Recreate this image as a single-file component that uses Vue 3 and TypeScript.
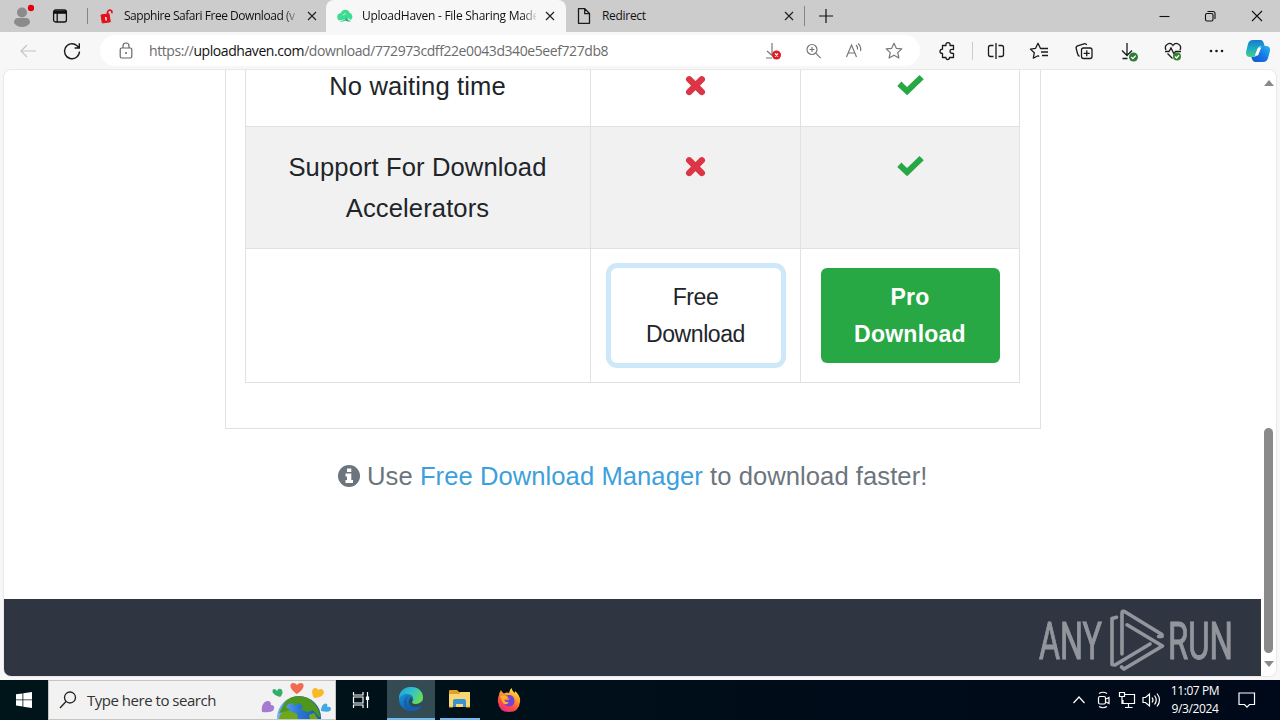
<script setup lang="ts">
interface Row {
  label: string
}

const rows: Row[] = [
  { label: 'No waiting time' },
  { label: 'Support For Download Accelerators' },
]
</script>

<template>
  <div class="screen">
    <header class="tabstrip">
      <div class="profile">
        <svg width="24" height="32" viewBox="0 0 24 32">
          <circle cx="12" cy="12.500" r="5" fill="#8b8b8b" />
          <path d="M4 23q0-5 4-5h8q4 0 4 5-3 4-8 4t-8-4z" fill="#8b8b8b" />
          <circle cx="21" cy="8" r="3.200" fill="#e3000f" />
        </svg>
      </div>
      <div class="workspaces">
        <svg width="16" height="16" viewBox="0 0 16 16" fill="none" stroke="#111" stroke-width="1.300">
          <rect x="1.600" y="2" width="12.800" height="12" rx="2" />
          <path d="M2 4.300h12" stroke-width="3" />
          <path d="M5.200 5v9" />
        </svg>
      </div>
      <div class="tab first">
        <svg class="fav" width="16" height="16" viewBox="0 0 16 16">
          <path d="M2 7l8-1.200 1.300 8L3.300 15z" fill="#e3101b" stroke="#e3101b" stroke-linejoin="round" />
          <path d="M8.500 6V4.200Q9.500 1.300 12.300 2.500 13.300 3 12.800 5.300" fill="none" stroke="#e3101b" stroke-width="1.700" />
          <path d="M6.700 9l.5 3.500" stroke="#fff" stroke-width="1.400" />
        </svg>
        <span class="title t1">Sapphire Safari Free Download (v</span>
        <svg class="close" width="12" height="12" viewBox="0 0 12 12"><path d="M2 2l8 8M10 2l-8 8" /></svg>
      </div>
      <div class="tab active">
        <svg class="fav" width="16" height="16" viewBox="0 0 16 16">
          <path d="M1.500 12.300C-1 9 .4 5.500 3.600 5.300 5 .500 11.500.500 12.800 5 16 6 16.200 10.500 13.500 12c-4-4.500-5 1-12 .3z" fill="#3ddc91" />
          <path d="M2.500 13c4 .5 6-2 7-4 1 2 2 3 4.500 4.500-2 0-5 .1-6-1-1 1-4 1.600-5.500.5z" fill="#24b886" />
          <path d="M5.500 7.500Q7 5 9 6" fill="none" stroke="#b7f5da" />
        </svg>
        <span class="title t2">UploadHaven - File Sharing Made</span>
        <svg class="close" width="12" height="12" viewBox="0 0 12 12"><path d="M2 2l8 8M10 2l-8 8" /></svg>
      </div>
      <div class="tab last">
        <svg class="fav" width="16" height="16" viewBox="0 0 16 16">
          <path d="M2.500.700h6.300L13.500 5.500V15.300h-11zM8.700.700v5h4.800" fill="none" stroke="#1a1a1a" stroke-width="1.300" stroke-linejoin="round" />
        </svg>
        <span class="title t3">Redirect</span>
        <svg class="close" width="12" height="12" viewBox="0 0 12 12"><path d="M2 2l8 8M10 2l-8 8" /></svg>
      </div>
      <svg class="newtab" width="16" height="16" viewBox="0 0 16 16"><path d="M1 8h14M8 1v14" stroke="#111" stroke-width="1.200" /></svg>
      <div class="winctl">
        <svg width="46" height="32" viewBox="0 0 46 32"><path d="M17.500 16.500h10" /></svg>
        <svg width="46" height="32" viewBox="0 0 46 32"><rect x="17.500" y="13.500" width="7.500" height="7.500" rx="1.500" /><path d="M19.500 11.500h5.500q2 0 2 2v5.500" /></svg>
        <svg width="46" height="32" viewBox="0 0 46 32"><path d="M18 11l10 10M28 11l-10 10" /></svg>
      </div>
    </header>

    <div class="toolbar">
      <svg class="back" width="20" height="20" viewBox="0 0 20 20"><path d="M18 10H3M9 4l-6 6 6 6" fill="none" stroke="#c4c4c4" stroke-width="1.200" /></svg>
      <svg class="reload" width="20" height="20" viewBox="0 0 20 20">
        <path d="M17.500 10.500A7.500 7.500 0 1 1 14.800 4.500L17 6.800M17.300 2.300V7h-4.700" fill="none" stroke="#1b1b1b" stroke-width="1.400" />
      </svg>
      <div class="address">
        <svg class="lock" width="16" height="18" viewBox="0 0 16 18" fill="none" stroke="#666" stroke-width="1.200">
          <rect x="2.200" y="6" width="11.600" height="10" rx="1.500" />
          <path d="M5 6V4q0-3 3-3t3 3v2" />
          <circle cx="8" cy="11" r="1" fill="#666" stroke="none" />
        </svg>
        <span class="url">https://<b>uploadhaven.com</b>/download/772973cdff22e0043d340e5eef727db8</span>
        <div class="urlicons">
          <svg width="40" height="24" viewBox="0 0 40 24" fill="none" stroke="#777" stroke-width="1.200">
            <path d="M18 4v12M13 12l5 4.500M12 19h6" />
            <circle cx="22.500" cy="16" r="4.500" fill="#e01b22" stroke="none" />
            <path d="M21 14.500l3 3M24 14.500l-3 3" stroke="#fff" />
          </svg>
          <svg width="40" height="24" viewBox="0 0 40 24" fill="none" stroke="#777" stroke-width="1.200">
            <circle cx="18" cy="10.500" r="5" /><path d="M21.700 14.200l5 5M15.500 10.500h5M18 8v5" />
          </svg>
          <svg width="40" height="24" viewBox="0 0 40 24" fill="none" stroke="#777" stroke-width="1.200">
            <path d="M12.500 18L17.500 6l5 12M14.200 14h6.600M22 6q2 1.800 1.500 4.500M24 4.500q3.500 3 2.500 7.500" />
          </svg>
          <svg width="40" height="24" viewBox="0 0 40 24" fill="none" stroke="#777" stroke-width="1.200" stroke-linejoin="round">
            <path d="M20 4.300l2.300 5 5.500.6-4.100 3.700 1.200 5.400-4.900-2.800-4.900 2.800 1.200-5.400-4.100-3.700 5.500-.6z" />
          </svg>
        </div>
      </div>
      <div class="actions">
        <svg width="44" height="24" viewBox="0 0 44 24" fill="none" stroke="#1b1b1b" stroke-width="1.300" stroke-linejoin="round">
          <path d="M15.500 6.500H19q-.5-2.800 2-2.800t2 2.800h3.500v4q-3.500-.5-3.500 1.700t3.500 2.300v4h-4q0 2-1.800 2t-1.700-2h-3.500v-4Q13 14.500 13 12.400t2.500-2.200z" />
        </svg>
        <i class="sep"></i>
        <svg width="44" height="24" viewBox="0 0 44 24" fill="none" stroke="#1b1b1b" stroke-width="1.300">
          <path d="M19.500 6.500h-3q-2 0-2 2v7q0 2 2 2h3M24.500 6.500h3q2 0 2 2v7q0 2-2 2h-3M22 4v16" />
        </svg>
        <svg width="45" height="24" viewBox="0 0 45 24" fill="none" stroke="#1b1b1b" stroke-width="1.300" stroke-linejoin="round">
          <path d="M24.500 9.500h-2L20 4.300l-2.400 5-5.200.8 3.900 3.700-1 5.400L20 16.700l1.200.8M24.500 9.500H30M23 13h7M24 16.500h6" />
        </svg>
        <svg width="44" height="24" viewBox="0 0 44 24" fill="none" stroke="#1b1b1b" stroke-width="1.300" stroke-linejoin="round">
          <path d="M16.500 17.500q-1.500-1-2-3l-1.300-5q-.5-2 1.400-2.600l6.400-2.100q2-.5 2.700 1.300" />
          <rect x="18.500" y="9" width="10.500" height="10.500" rx="2" /><path d="M23.750 11.300v6M20.700 14.300h6" />
        </svg>
        <svg width="45" height="24" viewBox="0 0 45 24" fill="none" stroke="#1b1b1b" stroke-width="1.300">
          <path d="M20 4v12M15 11.500l5 5 5-5M15.500 19.500h5" />
          <circle cx="26.500" cy="18" r="4.500" fill="#2d7d37" stroke="none" /><path d="M24.300 18l1.600 1.600 2.800-3" stroke="#fff" />
        </svg>
        <svg width="44" height="24" viewBox="0 0 44 24" fill="none" stroke="#1b1b1b" stroke-width="1.300">
          <path d="M14 11c-2.500-5 4-9 7-4.500 3-4.500 9.500-.5 7 4.500M13 12.500h4l2-3.500 3 6 1.500-2.500H29M15.500 14.500l5 5" />
          <circle cx="25" cy="17.500" r="4" fill="#35852f" stroke="none" /><path d="M23 17.500l1.500 1.500 2.500-2.700" stroke="#fff" />
        </svg>
        <svg width="42" height="24" viewBox="0 0 42 24" fill="#1b1b1b">
          <circle cx="15" cy="12" r="1.300" /><circle cx="20.500" cy="12" r="1.300" /><circle cx="26" cy="12" r="1.300" />
        </svg>
        <svg class="copilot" width="26" height="24" viewBox="0 0 26 24">
          <defs>
            <linearGradient id="cpa" x1="0" y1="0" x2="0" y2="1"><stop offset="0" stop-color="#1978d4" /><stop offset=".55" stop-color="#20afc0" /><stop offset="1" stop-color="#45cf88" /></linearGradient>
            <linearGradient id="cpb" x1="1" y1="0" x2="0" y2="1"><stop offset="0" stop-color="#25b9ec" /><stop offset=".5" stop-color="#1675e7" /><stop offset="1" stop-color="#1455cf" /></linearGradient>
          </defs>
          <path d="M8 1h7.500q2.500 0 3.500 4l.7 2H16q-2 0-3 3l-2 6q-.8 2-3 2H5q-4.500 0-4-5l2-8q1-4 5-4z" fill="url(#cpa)" />
          <path d="M18 23h-7.500q-2.500 0-3.500-3l-.6-2H9q2.300 0 3.200-3l2-6q.8-2 3-2H21q4.500 0 4 5l-2 7q-1 4-5 4z" fill="url(#cpb)" />
          <path d="M13 8.500h3.200L13 16.500H9.800z" fill="#fff" />
        </svg>
      </div>
    </div>

    <main class="frame">
      <div class="page">
        <section class="card">
          <div class="table">
            <template v-for="(row, i) in rows" :key="row.label">
              <div :class="['cell', 'label', 'row' + i]"><span>{{ row.label }}</span></div>
              <div :class="['cell', 'row' + i]">
                <svg class="mark" width="22" height="41" viewBox="0 0 22 41"><path d="M4.200 13.300l12.600 12.600M16.800 13.300L4.200 25.900" fill="none" stroke="#dc3545" stroke-width="6.400" stroke-linecap="round" /></svg>
              </div>
              <div :class="['cell', 'row' + i]">
                <svg class="mark" width="28" height="41" viewBox="0 0 28 41"><path d="M5.500 19.800l5.600 5.400L23.500 13.200" fill="none" stroke="#28a745" stroke-width="6" stroke-linecap="square" stroke-linejoin="miter" /></svg>
              </div>
            </template>
            <div class="cell buttons"></div>
            <div class="cell buttons"><button class="btn free">Free<br>Download</button></div>
            <div class="cell buttons"><button class="btn pro">Pro<br>Download</button></div>
          </div>
        </section>
        <p class="tip">
          <svg width="22" height="22" viewBox="0 0 22 22"><circle cx="11" cy="11" r="11" fill="#6c757d" /><path d="M9 3.500h4.300v3.400H9zM7.500 8.500h5.800v6.500h1.700v3H7.500v-3H9v-3.600H7.500z" fill="#fff" /></svg>
          <span>Use <a>Free Download Manager</a> to download faster!</span>
        </p>
        <footer class="footer"></footer>
      </div>
      <div class="scroll">
        <svg width="10" height="6" viewBox="0 0 10 6"><path d="M0 6l5-6 5 6z" fill="#8a8a8a" /></svg>
        <div class="thumb"></div>
        <svg width="10" height="6" viewBox="0 0 10 6"><path d="M0 0l5 6 5-6z" fill="#8a8a8a" /></svg>
      </div>
    </main>

    <svg class="watermark" width="204" height="66" viewBox="0 0 204 66">
      <g fill="#fff" font-family="Roboto, sans-serif" font-size="51.500" font-weight="400" stroke="#fff" stroke-width="1">
        <text x="2" y="50.500" textLength="63" lengthAdjust="spacingAndGlyphs">ANY</text>
        <text x="131" y="50.500" textLength="65" lengthAdjust="spacingAndGlyphs">RUN</text>
      </g>
      <g fill="none" stroke="#fff" stroke-width="3.600" stroke-linejoin="round" stroke-linecap="round">
        <path d="M79.500 9.300L75 10.500v46l3 .5 35-21" />
        <path d="M85 46V5q0-2.500 2.500-1.500L125 26.500v2h-3.500" />
        <path d="M90 16.800L125.500 38 87 61l-2.500-2" />
      </g>
    </svg>

    <div class="taskbar">
      <div class="start"><svg width="16" height="16" viewBox="0 0 16 16" fill="#fff"><path d="M0 2.300l6.500-.9v6.100H0zM7.300 1.300L16 0v7.500H7.300zM0 8.300h6.500v6.200L0 13.600zM7.300 8.300H16V16l-8.700-1.300z" /></svg></div>
      <div class="search">
        <svg width="18" height="18" viewBox="0 0 18 18" fill="none" stroke="#222" stroke-width="1.300"><circle cx="11" cy="6.500" r="5.500" /><path d="M7 10.500L1 17" /></svg>
        <span>Type here to search</span>
        <svg class="earth" width="74" height="38" viewBox="0 0 74 38">
          <defs><linearGradient id="sea"><stop offset="0" stop-color="#79b4fb" /><stop offset=".5" stop-color="#2a76d6" /><stop offset="1" stop-color="#1859ac" /></linearGradient></defs>
          <circle cx="38" cy="37" r="22" fill="url(#sea)" />
          <path d="M24 21q6-6 13-6 9 0 15 6 7 7 7 16l-3-3-4-5-5 2-7-2 2-4-5-3-3 3-2-3-5 1-2 3 4 3-4 2-7 1z" fill="#4f971c" />
          <path d="M19 34l3-3 7-1 7 3 1 5H18zM48 34l5-2 4 6h-8z" fill="#6fa81b" />
          <path d="M36 13C27 7 29 2 32 2q3 0 4 2 1-2 4-2c4 0 4 6-4 11z" fill="#f26b50" />
          <path d="M19 16C11 14 10 9 13 8q2 0 3 2 1-3 4-2c3 2 1 7-1 8z" fill="#35ae69" />
          <path d="M53 17C50 12 51 7 54 7q3 0 3 2 3-2 5 0c3 4-2 8-9 8z" fill="#fbb827" />
          <path d="M1 31C0 24 3 20 7 20q3 0 3 4 4 0 3 4-1 4-12 3z" fill="#a47bd1" />
          <path d="M60 30C60 24 64 21 66 23q1 1 0 3 4-1 4 2 0 4-10 2z" fill="#41a7e7" />
        </svg>
      </div>
      <div class="app">
        <svg width="20" height="20" viewBox="0 0 20 20" fill="none" stroke="#fff" stroke-width="1.200"><path d="M2.500 2v3h9.500V2M2.500 18v-3H12v3M2.500 7H12v6H2.500zM16.500 2v16" /><path d="M15.500 7h2v2.500h-2z" fill="#fff" /></svg>
      </div>
      <div class="app open current">
        <svg width="26" height="26" viewBox="0 0 26 26">
          <defs>
            <linearGradient id="ea" x1="0" y1="0" x2="1" y2=".5"><stop offset="0" stop-color="#249bdc" /><stop offset=".55" stop-color="#30c4c8" /><stop offset="1" stop-color="#67db59" /></linearGradient>
            <linearGradient id="eb" x1="0" y1="0" x2=".8" y2="1"><stop offset="0" stop-color="#1ba4e2" /><stop offset="1" stop-color="#0c4c9c" /></linearGradient>
          </defs>
          <circle cx="13" cy="13" r="12" fill="url(#eb)" />
          <path d="M1 13C1 5 6 1 13 1c8 0 12 5 12 10.500 0 5-4 6.500-7 6.500-5 0-4-2-3-3.500C16 12 14 8 9.500 8 5 8 2 10 1 13z" fill="url(#ea)" />
          <path d="M11 10q-3 2-2.500 5.500C9 20 13 22 18 21q3-.5 5.500-2-2 6-9.500 6C8 25 5 20 6 15q1-4 5-5z" fill="#1260b2" />
          <path d="M14.500 14.500C13 17 14 18 18 18q4 0 6-3l-.5 4q-3 2-6 2-5 0-6.500-3.500-1-3 1.500-6 2 1 2 3z" fill="#314a52" />
        </svg>
      </div>
      <div class="app open">
        <svg class="folder" width="24" height="22" viewBox="0 0 24 22">
          <path d="M1 3q0-1 1-1h7l2 2h11v14H1z" fill="#e3a026" /><path d="M1 6h10l2-2h9v15H1z" fill="#f9d773" />
          <path d="M5 19v-6q0-2 2-2h9q2 0 2 2v6h-3v-3H8v3z" fill="#3c91d0" /><path d="M1 19h4M18 19h4" stroke="#ddad42" />
        </svg>
      </div>
      <div class="app">
        <svg width="24" height="26" viewBox="0 0 24 26">
          <defs><linearGradient id="ff" x1=".8" y1="0" x2=".3" y2="1"><stop offset="0" stop-color="#fff044" /><stop offset=".4" stop-color="#ff9a28" /><stop offset=".7" stop-color="#ff4c42" /><stop offset="1" stop-color="#e82b80" /></linearGradient></defs>
          <path d="M2 8q0-2 2-5 1 3 3 3.500Q10 5 12 6q1-4 2.500-5Q15 4 18 6V4q6 5 5 11-1 10-11 10T1 15q-.5-4 1-7z" fill="url(#ff)" />
          <path d="M8 9q8-3 9.500 4Q18 19 12 19.500 6 19 7 13l4 .5 2-2-3-.5z" fill="#7142d7" />
          <path d="M3 9q3-1 5 0l3 .5-1 2.500-3 .8Q8 16 12 15q-2 4-6 1z" fill="#ffb32c" />
        </svg>
      </div>
      <div class="tray">
        <svg width="24" height="24" viewBox="0 0 24 24"><path d="M6.500 15l5.500-6 5.500 6" /></svg>
        <svg width="24" height="24" viewBox="0 0 24 24"><rect x="7.500" y="8.500" width="7" height="7.500" rx="1.500" /><path d="M15 11l3-1.500v6L15 14M8 5.500q4-2.500 8 0M8 18.500q4 2.500 8 0" /></svg>
        <svg width="24" height="24" viewBox="0 0 24 24"><path d="M10 6.500h9.500v9H8V12M13.500 16v3.500M10 19.500h7.500M4.500 4.500h5v4h-5zM7 9v7" /></svg>
        <svg width="24" height="24" viewBox="0 0 24 24"><path d="M4 9.500h2.500l4-3.500v12l-4-3.500H4zM13 9.500q2 2.500 0 5M15.500 7.500q3.500 4.500 0 9M18 5.500q5 6.500 0 13" /></svg>
        <div class="clock"><span>11:07 PM</span><span>9/3/2024</span></div>
        <svg class="note" width="20" height="20" viewBox="0 0 20 20"><path d="M2 3h15.500v11.500h-5L10 17.200l-2.500-2.700H2z" /></svg>
      </div>
    </div>
  </div>
</template>

<style>
body {
  margin: 0;
  overflow: hidden;
}
</style>

<style scoped>
.screen {
  position: relative;
  width: 1280px;
  height: 720px;
  overflow: hidden;
  display: flex;
  flex-direction: column;
  background: #f7f7f7;
  font-family: "Liberation Sans", Arial, sans-serif;
}
svg {
  display: block;
  flex: none;
}
.tabstrip {
  flex: none;
  height: 32px;
  display: flex;
  align-items: center;
  background: #ccc;
}
.profile {
  padding-left: 10px;
}
.workspaces {
  width: 54px;
  box-sizing: border-box;
  padding-left: 18px;
  border-right: 1px solid #858585;
}
.tab {
  box-sizing: border-box;
  height: 32px;
  display: flex;
  align-items: center;
  padding: 0 9px 0 11px;
}
.first {
  width: 238px;
}
.active {
  width: 240px;
  background: #f7f7f7;
  border-radius: 8px 8px 0 0;
}
.last {
  width: 239px;
  height: 20px;
  padding-left: 10px;
  border-right: 1px solid #858585;
}
.title {
  flex: none;
  width: 174px;
  margin-left: 9px;
  margin-right: 8px;
  white-space: nowrap;
  font: 12px/18px "Open Sans", sans-serif;
  letter-spacing: -0.46px;
  color: #111;
}
.t1,
.t2 {
  -webkit-mask-image: linear-gradient(90deg, #000 160px, transparent 176px);
  mask-image: linear-gradient(90deg, #000 160px, transparent 176px);
}
.t2 {
  letter-spacing: -0.26px;
}
.t3 {
  width: 173px;
  margin-left: 10px;
  letter-spacing: -0.3px;
}
.close {
  fill: none;
  stroke: #222;
  stroke-width: 1.2;
}
.newtab {
  margin-left: 13px;
}
.winctl {
  display: flex;
  margin-left: auto;
  fill: none;
  stroke: #111;
  stroke-width: 1.1;
}
.toolbar {
  flex: none;
  height: 37px;
  display: flex;
  align-items: center;
}
.back {
  margin-left: 18px;
}
.reload {
  margin-left: 24px;
}
.address {
  box-sizing: border-box;
  width: 820px;
  height: 31px;
  margin-left: 18px;
  padding: 0 6px 0 18px;
  border-radius: 16px;
  display: flex;
  align-items: center;
  background: #fff;
}
.url {
  margin-left: 15px;
  white-space: nowrap;
  font: 14px/20px "Open Sans", sans-serif;
  letter-spacing: -0.42px;
  color: #6b6b6b;
}
.url b {
  font-weight: 400;
  color: #111;
}
.urlicons {
  display: flex;
  margin-left: auto;
}
.actions {
  display: flex;
  align-items: center;
  margin-left: 7px;
}
.sep {
  width: 1px;
  height: 18px;
  margin: 0 1px;
  background: #ccc;
}
.copilot {
  margin-left: 7px;
}
.frame {
  flex: none;
  box-sizing: border-box;
  width: 1274px;
  height: 608px;
  margin-left: 3px;
  display: flex;
  overflow: hidden;
  background: #fff;
  border: 1px solid #e8e8e8;
  border-radius: 8px;
}
.page {
  width: 1257px;
  display: flex;
  flex-direction: column;
  overflow: hidden;
}
.card {
  flex: none;
  box-sizing: border-box;
  width: 816px;
  height: 359px;
  margin-left: 221px;
  padding: 0 19px;
  border: 1px solid #dee2e6;
  border-top: 0;
}
.table {
  display: grid;
  grid-template-columns: 345px 210px 219px;
  grid-template-rows: 57px 122px 134px;
  border-left: 1px solid #dee2e6;
}
.cell {
  box-sizing: border-box;
  display: flex;
  justify-content: center;
  align-items: flex-start;
  padding-top: 19.5px;
  border-right: 1px solid #dee2e6;
  border-bottom: 1px solid #dee2e6;
}
.label {
  padding-left: 18px;
  padding-right: 19px;
  font-size: 25.6px;
  line-height: 41px;
  letter-spacing: 0.1px;
  text-align: center;
  color: #212529;
}
.row0 {
  padding-top: 0;
}
.row0 > * {
  margin-top: -4px;
}
.row1 {
  background: #f1f1f1;
}
.buttons {
  padding-top: 19px;
}
.btn {
  width: 179px;
  height: 95px;
  padding: 0;
  border: 0;
  border-radius: 6px;
  font: 23.04px/37px "Liberation Sans", Arial, sans-serif;
  color: #212529;
}
.free {
  width: 170px;
  letter-spacing: -0.45px;
  background: #fff;
  box-shadow: 0 0 0 5px #cde8f8;
}
.pro {
  background: #28a745;
  color: #fff;
  font-weight: 700;
  letter-spacing: 0.22px;
}
.tip {
  flex: none;
  height: 41px;
  margin: 26px 0 0 334px;
  display: flex;
  align-items: center;
  gap: 7px;
  font-size: 25.6px;
  line-height: 41px;
  letter-spacing: 0.06px;
  white-space: nowrap;
  color: #6c757d;
}
.tip span {
  padding-top: 2px;
}
.tip a {
  color: #3d9fdc;
}
.footer {
  flex: none;
  height: 77px;
  margin-top: auto;
  background: #2f3541;
}
.scroll {
  width: 15px;
  display: flex;
  flex-direction: column;
  align-items: center;
  box-sizing: border-box;
  padding: 10px 0 9px;
}
.thumb {
  width: 9px;
  height: 225px;
  margin: auto 0 8px;
  border-radius: 5px;
  background: #8a8a8a;
}
.watermark {
  position: absolute;
  left: 1037px;
  top: 608px;
  opacity: 0.48;
}
.taskbar {
  flex: none;
  height: 40px;
  margin-top: auto;
  display: flex;
  background: linear-gradient(90deg, #001519, #000d19 60%, #000919);
}
.start {
  width: 48px;
  display: flex;
  align-items: center;
  justify-content: center;
}
.search {
  box-sizing: border-box;
  width: 288px;
  height: 40px;
  padding-left: 10px;
  border: 1px solid #c2c8bd;
  display: flex;
  align-items: center;
  background: #f2f2f2;
}
.search span {
  margin-left: 10px;
  white-space: nowrap;
  font: 15px/20px "Open Sans", sans-serif;
  letter-spacing: -0.48px;
  color: #333;
}
.earth {
  margin-left: auto;
}
.app {
  width: 48px;
  margin-right: 1px;
  display: flex;
  align-items: center;
  justify-content: center;
  box-sizing: border-box;
}
.app:nth-child(3) {
  width: 50px;
}
.open {
  width: 40px;
  margin: 0 5px;
  border-bottom: 2px solid #76b9ed;
}
.current {
  width: 48px;
  margin: 0;
  background: #344b53;
}
.tray {
  display: flex;
  align-items: center;
  margin-left: auto;
  width: 213px;
  fill: none;
  stroke: #fff;
  stroke-width: 1.2;
}
.clock {
  width: 64px;
  margin-left: 0;
  display: flex;
  flex-direction: column;
  align-items: center;
  white-space: nowrap;
  font: 12px/18px "Open Sans", sans-serif;
  letter-spacing: -0.4px;
  color: #fff;
}
.note {
  margin-left: 10px;
}
</style>
